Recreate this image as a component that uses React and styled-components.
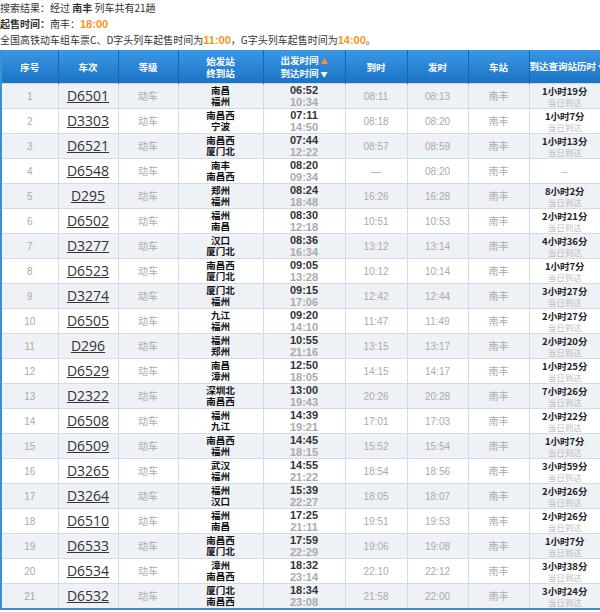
import React from "react";
import styled, { createGlobalStyle } from "styled-components";

const Global = createGlobalStyle`
  body { margin: 0; background: #fff; font-family: "Noto Sans CJK SC", "Liberation Sans", sans-serif; }
`;

const Info = styled.div`
  font-size: 10px; color: #333; line-height: 16px; height: 16px; white-space: nowrap;
  b { font-weight: bold; }
  em { font-style: normal; color: #f7931e; font-weight: bold; font-family: "Liberation Sans", sans-serif; font-size: 11px; }
`;
const Header = styled.div`height: 50px; display: flex; flex-direction: column;`;

const Table = styled.table`
  width: 600px; border-collapse: collapse; table-layout: fixed;
  border: 2px solid #3b8fd5; border-top: none;
`;
const Th = styled.th`
  height: 33px; padding: 0; color: #fff; font-size: 9.5px; font-weight: bold; line-height: 12px;
  white-space: nowrap; overflow: hidden;
  background: linear-gradient(#3a98e6, #1c72c4);
  border-left: 1px solid #5aa7e4; border-right: 1px solid #1766b5;
`;
const Tr = styled.tr`background: ${p => (p.$odd ? "#eef1f6" : "#fff")};`;
const Td = styled.td`
  height: 24px; padding: 0; text-align: center; border: 1px solid #cfdceb;
  color: ${p => p.$c || "#aaa"}; font-size: ${p => p.$fs || 10}px; line-height: 12px;
  font-weight: ${p => (p.$b ? "bold" : "normal")}; overflow: hidden; white-space: nowrap;
`;
const Stations = styled.div`
  font-size: 9.5px; line-height: 11.5px; color: #111; font-weight: bold;
`;
const TrainNo = styled.span`
  font-family: "Open Sans", "Liberation Sans", sans-serif; font-size: 14px; color: #333; text-decoration: underline;
`;
const Time = styled.div`
  font-family: "Liberation Sans", sans-serif; font-weight: bold; font-size: 11px; line-height: 12px;
  color: ${p => p.$c};
`;
const Num = styled.span`font-family: "Liberation Sans", sans-serif;`;
const Dur = styled.div`color: #222; font-weight: bold; font-size: 9.5px; line-height: 12px;`;
const Sub = styled.div`color: #bbb; font-size: 8.5px; line-height: 11px;`;
const Arrow = styled.span`color: ${p => p.$c}; font-size: 7px; margin-left: 2px;`;

const data = [
  ["D6501","南昌","福州","06:52","10:34","08:11","08:13","1小时19分"],
  ["D3303","南昌西","宁波","07:11","14:50","08:18","08:20","1小时7分"],
  ["D6521","南昌西","厦门北","07:44","12:22","08:57","08:59","1小时13分"],
  ["D6548","南丰","南昌西","08:20","09:34","—","08:20","--"],
  ["D295","郑州","福州","08:24","18:48","16:26","16:28","8小时2分"],
  ["D6502","福州","南昌","08:30","12:18","10:51","10:53","2小时21分"],
  ["D3277","汉口","厦门北","08:36","16:34","13:12","13:14","4小时36分"],
  ["D6523","南昌西","厦门北","09:05","13:28","10:12","10:14","1小时7分"],
  ["D3274","厦门北","福州","09:15","17:06","12:42","12:44","3小时27分"],
  ["D6505","九江","福州","09:20","14:10","11:47","11:49","2小时27分"],
  ["D296","福州","郑州","10:55","21:16","13:15","13:17","2小时20分"],
  ["D6529","南昌","漳州","12:50","18:05","14:15","14:17","1小时25分"],
  ["D2322","深圳北","南昌西","13:00","19:43","20:26","20:28","7小时26分"],
  ["D6508","福州","九江","14:39","19:21","17:01","17:03","2小时22分"],
  ["D6509","南昌西","福州","14:45","18:15","15:52","15:54","1小时7分"],
  ["D3265","武汉","福州","14:55","21:22","18:54","18:56","3小时59分"],
  ["D3264","福州","汉口","15:39","22:27","18:05","18:07","2小时26分"],
  ["D6510","福州","南昌","17:25","21:11","19:51","19:53","2小时26分"],
  ["D6533","南昌西","厦门北","17:59","22:29","19:06","19:08","1小时7分"],
  ["D6534","漳州","南昌西","18:32","23:14","22:10","22:12","3小时38分"],
  ["D6532","厦门北","南昌西","18:34","23:08","21:58","22:00","3小时24分"],
];

const widths = [57, 60, 60, 85, 82, 62, 61, 61, 72];

export default function App() {
  return (
    <>
      <Global />
      <Header>
        <Info>搜索结果：经过 <b>南丰</b> 列车共有21趟</Info>
        <Info><b>起售时间：</b>南丰：<em>18:00</em></Info>
        <Info>全国高铁动车组车票C、D字头列车起售时间为<em>11:00</em>，G字头列车起售时间为<em>14:00</em>。</Info>
      </Header>
      <Table>
        <colgroup>{widths.map((w, i) => <col key={i} style={{ width: w }} />)}</colgroup>
        <thead>
          <tr>
            <Th>序号</Th><Th>车次</Th><Th>等级</Th>
            <Th>始发站<br />终到站</Th>
            <Th>出发时间<Arrow $c="#f7931e">▲</Arrow><br />到达时间<Arrow $c="#fff">▼</Arrow></Th>
            <Th>到时</Th><Th>发时</Th><Th>车站</Th>
            <Th>到达查询站历时<Arrow $c="#fff">▼</Arrow></Th>
          </tr>
        </thead>
        <tbody>
          {data.map((r, i) => (
            <Tr key={i} $odd={i % 2 === 0}>
              <Td><Num>{i + 1}</Num></Td>
              <Td><TrainNo>{r[0]}</TrainNo></Td>
              <Td>动车</Td>
              <Td><Stations>{r[1]}</Stations><Stations>{r[2]}</Stations></Td>
              <Td><Time $c="#333">{r[3]}</Time><Time $c="#aaa">{r[4]}</Time></Td>
              <Td><Num>{r[5]}</Num></Td>
              <Td><Num>{r[6]}</Num></Td>
              <Td>南丰</Td>
              <Td>
                {r[7] === "--" ? <Sub style={{ color: "#888" }}>--</Sub> : (<><Dur>{r[7]}</Dur><Sub>当日到达</Sub></>)}
              </Td>
            </Tr>
          ))}
        </tbody>
      </Table>
    </>
  );
}
